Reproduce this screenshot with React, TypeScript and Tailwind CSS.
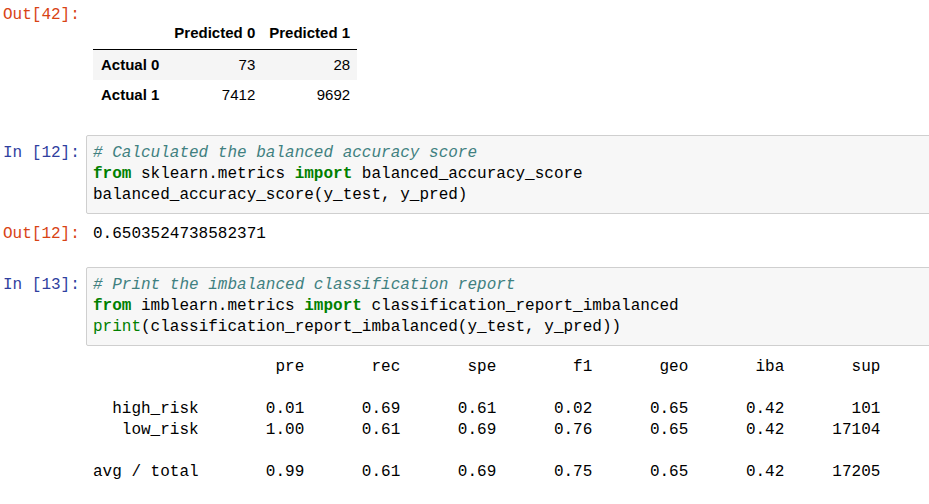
import React from 'react';

const MONO = "font-['Liberation_Mono',monospace]";

const REPORT = `                   pre       rec       spe        f1       geo       iba       sup

  high_risk       0.01      0.69      0.61      0.02      0.65      0.42       101
   low_risk       1.00      0.61      0.69      0.76      0.65      0.42     17104

avg / total       0.99      0.61      0.69      0.75      0.65      0.42     17205`;

function Prompt({ kind, n }: { kind: 'In' | 'Out'; n: number }) {
  return (
    <div
      className={`w-[86px] shrink-0 pl-[3px] text-[16px] leading-[21px] whitespace-pre ${MONO} ${
        kind === 'In' ? 'text-[#303F9F]' : 'text-[#D84315]'
      }`}
    >
      {kind === 'In' ? `In [${n}]:` : `Out[${n}]:`}
    </div>
  );
}

// code cell box runs past the right edge of the window, like the notebook
function CodeBox({ children }: { children: React.ReactNode }) {
  return (
    <div className="flex-1 min-w-0 -mr-[20px] border border-[#cfcfcf] bg-[#f7f7f7] rounded-[2px] px-[6px] py-[7px]">
      <pre className={`text-[16px] leading-[21px] text-black whitespace-pre ${MONO}`}>{children}</pre>
    </div>
  );
}

const Cm = ({ t }: { t: string }) => <span className="italic text-[#408080]">{t}</span>;
const Kw = ({ t }: { t: string }) => <span className="font-bold text-[#008000]">{t}</span>;
const Bi = ({ t }: { t: string }) => <span className="text-[#008000]">{t}</span>;

export default function App() {
  return (
    <div className="w-[929px] h-[504px] overflow-hidden bg-white">
      {/* Out[42] confusion matrix */}
      <div className="flex pt-[5px]">
        <Prompt kind="Out" n={42} />
        <div className="pl-[7px] pt-[13px]">
          <table className="font-['Liberation_Sans',Arial,sans-serif] text-[15px] text-black border-collapse">
            <thead>
              <tr className="h-[31px] border-b border-black">
                <th className="px-[7px]"></th>
                <th className="px-[7px] text-right font-bold">Predicted 0</th>
                <th className="px-[7px] text-right font-bold">Predicted 1</th>
              </tr>
            </thead>
            <tbody>
              <tr className="h-[31px] bg-[#f5f5f5]">
                <th className="px-[8px] text-left font-bold">Actual 0</th>
                <td className="px-[7px] text-right">73</td>
                <td className="px-[7px] text-right">28</td>
              </tr>
              <tr className="h-[31px]">
                <th className="px-[8px] text-left font-bold">Actual 1</th>
                <td className="px-[7px] text-right">7412</td>
                <td className="px-[7px] text-right">9692</td>
              </tr>
            </tbody>
          </table>
        </div>
      </div>

      {/* In [12] */}
      <div className="flex mt-[24px]">
        <div className="pt-[8px]">
          <Prompt kind="In" n={12} />
        </div>
        <CodeBox>
          <Cm t="# Calculated the balanced accuracy score" />
          {'\n'}
          <Kw t="from" /> sklearn.metrics <Kw t="import" /> balanced_accuracy_score
          {'\n'}balanced_accuracy_score(y_test, y_pred)
        </CodeBox>
      </div>

      {/* Out[12] */}
      <div className="flex mt-[10px]">
        <Prompt kind="Out" n={12} />
        <div className={`pl-[7px] text-[16px] leading-[21px] text-black ${MONO}`}>0.6503524738582371</div>
      </div>

      {/* In [13] */}
      <div className="flex mt-[22px]">
        <div className="pt-[8px]">
          <Prompt kind="In" n={13} />
        </div>
        <CodeBox>
          <Cm t="# Print the imbalanced classification report" />
          {'\n'}
          <Kw t="from" /> imblearn.metrics <Kw t="import" /> classification_report_imbalanced
          {'\n'}
          <Bi t="print" />
          (classification_report_imbalanced(y_test, y_pred))
        </CodeBox>
      </div>

      {/* report output */}
      <div className="flex mt-[11px]">
        <div className="w-[86px] shrink-0" />
        <pre className={`pl-[7px] text-[16px] leading-[21px] text-black whitespace-pre ${MONO}`}>{REPORT}</pre>
      </div>
    </div>
  );
}
